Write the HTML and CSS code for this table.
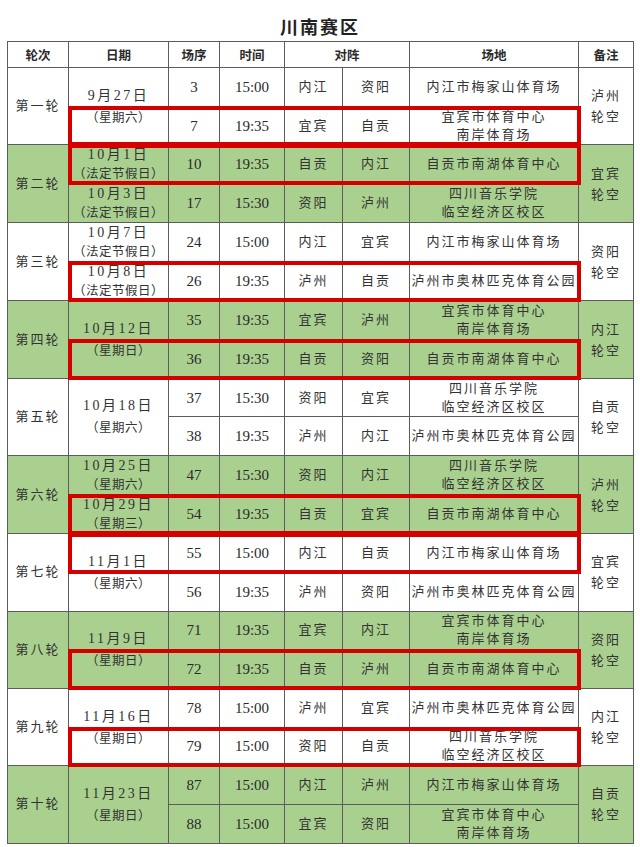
FILE: index.html
```html
<!DOCTYPE html>
<html lang="zh-CN">
<head>
<meta charset="utf-8">
<title>川南赛区</title>
<link rel="stylesheet" href="styles.css">
</head>
<body>
<div class="page">
  <div class="title">川南赛区</div>
  <table class="sched">
    <colgroup>
      <col class="c-round"><col class="c-date"><col class="c-seq"><col class="c-time">
      <col class="c-t1"><col class="c-t2"><col class="c-venue"><col class="c-note">
    </colgroup>
    <thead>
      <tr><th>轮次</th><th>日期</th><th>场序</th><th>时间</th><th colspan="2">对阵</th><th>场地</th><th>备注</th></tr>
    </thead>
    <tbody>
      <tr>
        <td class="cn" rowspan="2">第一轮</td>
        <td class="date tall" rowspan="2"><span class="d1">9月27日</span><br><span class="d2">（星期六）</span></td>
        <td class="num">3</td><td class="num">15:00</td><td class="cn">内江</td><td class="cn">资阳</td>
        <td class="cn">内江市梅家山体育场</td>
        <td class="cn tall" rowspan="2">泸州<br>轮空</td>
      </tr>
      <tr>
        <td class="num hl">7<i class="mark"></i></td><td class="num">19:35</td><td class="cn">宜宾</td><td class="cn">自贡</td>
        <td class="cn">宜宾市体育中心<br>南岸体育场</td>
      </tr>

      <tr class="green">
        <td class="cn" rowspan="2">第二轮</td>
        <td class="date"><span class="d1">10月1日</span><br><span class="d2">（法定节假日）</span></td>
        <td class="num hl">10<i class="mark"></i></td><td class="num">19:35</td><td class="cn">自贡</td><td class="cn">内江</td>
        <td class="cn">自贡市南湖体育中心</td>
        <td class="cn tall" rowspan="2">宜宾<br>轮空</td>
      </tr>
      <tr class="green">
        <td class="date"><span class="d1">10月3日</span><br><span class="d2">（法定节假日）</span></td>
        <td class="num">17</td><td class="num">15:30</td><td class="cn">资阳</td><td class="cn">泸州</td>
        <td class="cn">四川音乐学院<br>临空经济区校区</td>
      </tr>

      <tr>
        <td class="cn" rowspan="2">第三轮</td>
        <td class="date"><span class="d1">10月7日</span><br><span class="d2">（法定节假日）</span></td>
        <td class="num">24</td><td class="num">15:00</td><td class="cn">内江</td><td class="cn">宜宾</td>
        <td class="cn">内江市梅家山体育场</td>
        <td class="cn tall" rowspan="2">资阳<br>轮空</td>
      </tr>
      <tr>
        <td class="date"><span class="d1">10月8日</span><br><span class="d2">（法定节假日）</span></td>
        <td class="num hl">26<i class="mark"></i></td><td class="num">19:35</td><td class="cn">泸州</td><td class="cn">自贡</td>
        <td class="cn">泸州市奥林匹克体育公园</td>
      </tr>

      <tr class="green">
        <td class="cn" rowspan="2">第四轮</td>
        <td class="date tall" rowspan="2"><span class="d1">10月12日</span><br><span class="d2">（星期日）</span></td>
        <td class="num">35</td><td class="num">19:35</td><td class="cn">宜宾</td><td class="cn">泸州</td>
        <td class="cn">宜宾市体育中心<br>南岸体育场</td>
        <td class="cn tall" rowspan="2">内江<br>轮空</td>
      </tr>
      <tr class="green">
        <td class="num hl">36<i class="mark"></i></td><td class="num">19:35</td><td class="cn">自贡</td><td class="cn">资阳</td>
        <td class="cn">自贡市南湖体育中心</td>
      </tr>

      <tr>
        <td class="cn" rowspan="2">第五轮</td>
        <td class="date tall" rowspan="2"><span class="d1">10月18日</span><br><span class="d2">（星期六）</span></td>
        <td class="num">37</td><td class="num">15:30</td><td class="cn">资阳</td><td class="cn">宜宾</td>
        <td class="cn">四川音乐学院<br>临空经济区校区</td>
        <td class="cn tall" rowspan="2">自贡<br>轮空</td>
      </tr>
      <tr>
        <td class="num">38</td><td class="num">19:35</td><td class="cn">泸州</td><td class="cn">内江</td>
        <td class="cn">泸州市奥林匹克体育公园</td>
      </tr>

      <tr class="green">
        <td class="cn" rowspan="2">第六轮</td>
        <td class="date"><span class="d1">10月25日</span><br><span class="d2">（星期六）</span></td>
        <td class="num">47</td><td class="num">15:30</td><td class="cn">资阳</td><td class="cn">内江</td>
        <td class="cn">四川音乐学院<br>临空经济区校区</td>
        <td class="cn tall" rowspan="2">泸州<br>轮空</td>
      </tr>
      <tr class="green">
        <td class="date"><span class="d1">10月29日</span><br><span class="d2">（星期三）</span></td>
        <td class="num hl">54<i class="mark"></i></td><td class="num">19:35</td><td class="cn">自贡</td><td class="cn">宜宾</td>
        <td class="cn">自贡市南湖体育中心</td>
      </tr>

      <tr>
        <td class="cn" rowspan="2">第七轮</td>
        <td class="date tall" rowspan="2"><span class="d1">11月1日</span><br><span class="d2">（星期六）</span></td>
        <td class="num hl">55<i class="mark"></i></td><td class="num">15:00</td><td class="cn">内江</td><td class="cn">自贡</td>
        <td class="cn">内江市梅家山体育场</td>
        <td class="cn tall" rowspan="2">宜宾<br>轮空</td>
      </tr>
      <tr>
        <td class="num">56</td><td class="num">19:35</td><td class="cn">泸州</td><td class="cn">资阳</td>
        <td class="cn">泸州市奥林匹克体育公园</td>
      </tr>

      <tr class="green">
        <td class="cn" rowspan="2">第八轮</td>
        <td class="date tall" rowspan="2"><span class="d1">11月9日</span><br><span class="d2">（星期日）</span></td>
        <td class="num">71</td><td class="num">19:35</td><td class="cn">宜宾</td><td class="cn">内江</td>
        <td class="cn">宜宾市体育中心<br>南岸体育场</td>
        <td class="cn tall" rowspan="2">资阳<br>轮空</td>
      </tr>
      <tr class="green">
        <td class="num hl">72<i class="mark"></i></td><td class="num">19:35</td><td class="cn">自贡</td><td class="cn">泸州</td>
        <td class="cn">自贡市南湖体育中心</td>
      </tr>

      <tr>
        <td class="cn" rowspan="2">第九轮</td>
        <td class="date tall" rowspan="2"><span class="d1">11月16日</span><br><span class="d2">（星期日）</span></td>
        <td class="num">78</td><td class="num">15:00</td><td class="cn">泸州</td><td class="cn">宜宾</td>
        <td class="cn">泸州市奥林匹克体育公园</td>
        <td class="cn tall" rowspan="2">内江<br>轮空</td>
      </tr>
      <tr>
        <td class="num hl">79<i class="mark"></i></td><td class="num">15:00</td><td class="cn">资阳</td><td class="cn">自贡</td>
        <td class="cn">四川音乐学院<br>临空经济区校区</td>
      </tr>

      <tr class="green">
        <td class="cn" rowspan="2">第十轮</td>
        <td class="date tall" rowspan="2"><span class="d1">11月23日</span><br><span class="d2">（星期日）</span></td>
        <td class="num">87</td><td class="num">15:00</td><td class="cn">内江</td><td class="cn">泸州</td>
        <td class="cn">内江市梅家山体育场</td>
        <td class="cn tall" rowspan="2">自贡<br>轮空</td>
      </tr>
      <tr class="green">
        <td class="num">88</td><td class="num">15:00</td><td class="cn">宜宾</td><td class="cn">资阳</td>
        <td class="cn">宜宾市体育中心<br>南岸体育场</td>
      </tr>
    </tbody>
  </table>
</div>
</body>
</html>
```

FILE: styles.css
```css
html, body {
  margin: 0;
  padding: 0;
  background: #ffffff;
}

body {
  font-family: "Liberation Serif", "Noto Sans CJK SC", serif;
  color: #333333;
  overflow: hidden;
}

.page {
  padding: 0 7px;
}

.title {
  height: 41px;
  box-sizing: border-box;
  padding-top: 14px;
  line-height: 24px;
  text-align: center;
  font-family: "Noto Sans CJK SC", sans-serif;
  font-weight: 700;
  font-size: 18px;
  letter-spacing: 2px;
  color: #222222;
}

.sched {
  width: 626px;
  border-collapse: collapse;
  table-layout: fixed;
}

.c-round { width: 61px; }
.c-date { width: 100px; }
.c-seq { width: 51px; }
.c-time { width: 65px; }
.c-t1 { width: 58px; }
.c-t2 { width: 67px; }
.c-venue { width: 169px; }
.c-note { width: 55px; }

.sched th,
.sched td {
  border: 1px solid #5c5c5c;
  padding: 0;
  text-align: center;
  vertical-align: middle;
}

.sched th {
  height: 25px;
  font-family: "Noto Sans CJK SC", sans-serif;
  font-weight: 700;
  font-size: 12.5px;
  color: #2a2a2a;
}

.sched tbody tr {
  height: 38.7px;
}

.green td {
  background: #a9d08e;
}

.num {
  font-size: 15px;
  line-height: 18px;
  color: #2a2a2a;
}

.cn {
  font-size: 13px;
  line-height: 18px;
  letter-spacing: 2px;
}

.date {
  line-height: 18px;
  white-space: nowrap;
}

.sched .tall {
  line-height: 21px;
}

.d1 {
  font-size: 14px;
  letter-spacing: 2.5px;
}

.d2 {
  font-size: 12.5px;
  letter-spacing: 0.5px;
}

.hl {
  position: relative;
}

.mark {
  position: absolute;
  left: -101px;
  width: 513px;
  top: -1px;
  bottom: -2px;
  box-sizing: border-box;
  border: 4px solid #d40000;
  z-index: 2;
}
```
